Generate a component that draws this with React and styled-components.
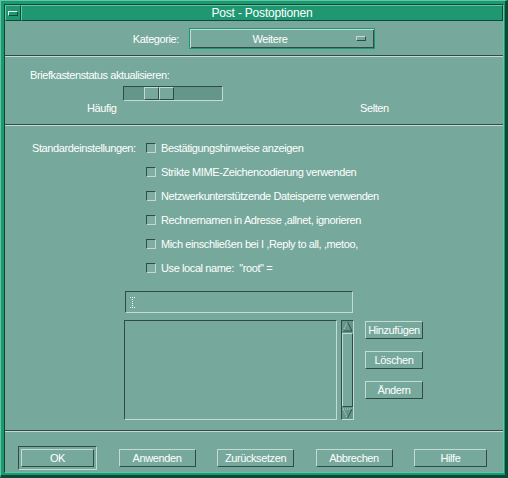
import React from 'react';
import styled, { createGlobalStyle } from 'styled-components';

const BG = '#76a99b';
const TROUGH = '#65968a';
const LIGHT = '#c4dbd3';
const DARK = '#2f4d46';
const GREEN = '#1f9872';

const GlobalStyle = createGlobalStyle`
  html, body {
    margin: 0;
    padding: 0;
    background: ${GREEN};
  }
  body {
    font-family: "Liberation Sans", Arial, sans-serif;
    font-size: 11px;
    letter-spacing: -0.4px;
    color: #fff;
  }
`;

const Frame = styled.div`
  width: 508px;
  height: 478px;
  box-sizing: border-box;
  background: ${GREEN};
  border-top: 1px solid #5cc9a2;
  border-left: 1px solid #5cc9a2;
  border-right: 3px solid #0c4a37;
  border-bottom: 3px solid #0c4a37;
  padding: 3px 1px 2px 3px;
  display: flex;
`;

const Inner = styled.div`
  flex: 1;
  display: flex;
  flex-direction: column;
  border-top: 1px solid #0c4a37;
  border-left: 1px solid #0c4a37;
  border-right: 1px solid #5cc9a2;
  border-bottom: 1px solid #5cc9a2;
`;

const TitleBar = styled.div`
  height: 16px;
  display: flex;
  background: ${GREEN};
`;

const MenuButton = styled.div`
  width: 16px;
  box-sizing: border-box;
  border-top: 1px solid #5cc9a2;
  border-left: 1px solid #5cc9a2;
  border-right: 1px solid #0c4a37;
  border-bottom: 1px solid #0c4a37;
  display: flex;
  align-items: center;
  justify-content: center;
  span {
    width: 8px;
    height: 3px;
    border-top: 1px solid #e6f3ee;
    border-left: 1px solid #e6f3ee;
    border-right: 1px solid #0c4a37;
    border-bottom: 1px solid #0c4a37;
  }
`;

const TitleBox = styled.div`
  flex: 1;
  box-sizing: border-box;
  border-top: 1px solid #5cc9a2;
  border-left: 1px solid #5cc9a2;
  border-right: 1px solid #0c4a37;
  border-bottom: 1px solid #0c4a37;
  display: flex;
  align-items: center;
  justify-content: center;
  font-size: 12px;
  letter-spacing: -0.2px;
`;

const Body = styled.div`
  flex: 1;
  background: ${BG};
  display: flex;
  flex-direction: column;
`;

const Separator = styled.div`
  border-top: 1px solid ${DARK};
  border-bottom: 1px solid ${LIGHT};
  margin-top: ${(p) => p.$top}px;
`;

const CategoryRow = styled.div`
  display: flex;
  align-items: center;
  padding-top: 7px;
`;

const CategoryLabel = styled.div`
  width: 174px;
  text-align: right;
  margin-right: 10px;
`;

const OptionMenu = styled.div`
  width: 186px;
  height: 21px;
  box-sizing: border-box;
  border: 1px solid ${GREEN};
  box-shadow: inset 1px 1px 0 ${LIGHT}, inset -1px -1px 0 ${DARK};
  display: flex;
  align-items: center;
  span {
    flex: 1;
    text-align: center;
  }
  i {
    width: 10px;
    height: 5px;
    box-sizing: border-box;
    margin: 0 8px 0 6px;
    border-top: 1px solid ${LIGHT};
    border-left: 1px solid ${LIGHT};
    border-right: 1px solid ${DARK};
    border-bottom: 1px solid ${DARK};
  }
`;

const StatusSection = styled.div`
  padding-top: 11px;
  display: flex;
  flex-direction: column;
`;

const SectionLabel = styled.div`
  line-height: 14px;
  padding-left: 25px;
`;

const Trough = styled.div`
  width: 100px;
  height: 15px;
  box-sizing: border-box;
  margin: 4px 0 0 118px;
  background: ${TROUGH};
  border-top: 1px solid ${DARK};
  border-left: 1px solid ${DARK};
  border-right: 1px solid ${LIGHT};
  border-bottom: 1px solid ${LIGHT};
  display: flex;
  padding-left: 20px;
`;

const Thumb = styled.div`
  width: 15px;
  box-sizing: border-box;
  background: ${BG};
  border-top: 1px solid ${LIGHT};
  border-left: 1px solid ${LIGHT};
  border-right: 1px solid ${DARK};
  border-bottom: 1px solid ${DARK};
`;

const ScaleLabels = styled.div`
  display: grid;
  grid-template-columns: 273px auto;
  padding-left: 82px;
  line-height: 14px;
`;

const DefaultsSection = styled.div`
  display: grid;
  grid-template-columns: 114px auto;
  padding: 10px 0 0 27px;
`;

const DefaultsLabel = styled.div`
  line-height: 24px;
`;

const CheckList = styled.div`
  display: flex;
  flex-direction: column;
`;

const CheckRow = styled.div`
  height: 24px;
  display: flex;
  align-items: center;
  white-space: pre;
`;

const CheckBox = styled.span`
  width: 10px;
  height: 10px;
  box-sizing: border-box;
  margin-right: 5px;
  background: #7fada1;
  border-top: 1px solid ${DARK};
  border-left: 1px solid ${DARK};
  border-right: 1px solid ${LIGHT};
  border-bottom: 1px solid ${LIGHT};
`;

const TextField = styled.div`
  width: 228px;
  height: 22px;
  box-sizing: border-box;
  margin: 11px 0 0 120px;
  border-top: 1px solid ${DARK};
  border-left: 1px solid ${DARK};
  border-right: 1px solid ${LIGHT};
  border-bottom: 1px solid ${LIGHT};
  display: flex;
  align-items: center;
  padding-left: 4px;
`;

const ListRow = styled.div`
  display: flex;
  margin: 7px 0 0 119px;
`;

const ListBox = styled.div`
  width: 213px;
  height: 100px;
  box-sizing: border-box;
  border-top: 1px solid ${DARK};
  border-left: 1px solid ${DARK};
  border-right: 1px solid ${LIGHT};
  border-bottom: 1px solid ${LIGHT};
`;

const ScrollBar = styled.div`
  width: 13px;
  height: 100px;
  box-sizing: border-box;
  margin-left: 4px;
  background: ${TROUGH};
  border-top: 1px solid ${DARK};
  border-left: 1px solid ${DARK};
  border-right: 1px solid ${LIGHT};
  border-bottom: 1px solid ${LIGHT};
  display: flex;
  flex-direction: column;
`;

const ScrollThumb = styled.div`
  flex: 1;
  margin: 1px 0;
  background: ${BG};
  border-top: 1px solid ${LIGHT};
  border-left: 1px solid ${LIGHT};
  border-right: 1px solid ${DARK};
  border-bottom: 1px solid ${DARK};
`;

const SideButtons = styled.div`
  display: flex;
  flex-direction: column;
  gap: 12px;
  margin: 1px 0 0 11px;
`;

const Button = styled.div`
  width: ${(p) => p.$w || 58}px;
  height: 18px;
  box-sizing: border-box;
  background: ${BG};
  border-top: 1px solid ${LIGHT};
  border-left: 1px solid ${LIGHT};
  border-right: 1px solid ${DARK};
  border-bottom: 1px solid ${DARK};
  display: flex;
  align-items: center;
  justify-content: center;
  white-space: nowrap;
`;

const ActionRow = styled.div`
  display: flex;
  align-items: center;
  justify-content: space-between;
  padding: 14px 16px 0 13px;
`;

const DefaultFrame = styled.div`
  padding: 2px;
  border-top: 1px solid ${DARK};
  border-left: 1px solid ${DARK};
  border-right: 1px solid ${LIGHT};
  border-bottom: 1px solid ${LIGHT};
`;

const Arrow = ({ up }) => (
  <svg width="11" height="11" viewBox="0 0 11 11">
    {up ? (
      <>
        <path d="M1 10 L5.5 1" stroke={LIGHT} strokeWidth="1" strokeDasharray="1 1" fill="none" />
        <path d="M5.5 1 L10 10 L1 10" stroke={DARK} strokeWidth="1" fill="none" />
      </>
    ) : (
      <>
        <path d="M1 1 L10 1 M1 1 L5.5 10" stroke={LIGHT} strokeWidth="1" strokeDasharray="1 1" fill="none" />
        <path d="M5.5 10 L10 1" stroke={DARK} strokeWidth="1" fill="none" />
      </>
    )}
  </svg>
);

const IBeam = () => (
  <svg width="5" height="11" viewBox="0 0 5 11">
    <path d="M0 0.5 H5 M0 10.5 H5 M2.5 0 V11" stroke="#fff" strokeWidth="1" strokeDasharray="1 1" fill="none" />
  </svg>
);

const options = [
  'Bestätigungshinweise anzeigen',
  'Strikte MIME-Zeichencodierung verwenden',
  'Netzwerkunterstützende Dateisperre verwenden',
  'Rechnernamen in Adresse ,allnet, ignorieren',
  'Mich einschließen bei I ,Reply to all, ,metoo,',
  'Use local name:  "root" =',
];

const App = () => {
  return (
    <>
      <GlobalStyle />
      <Frame>
        <Inner>
          <TitleBar>
            <MenuButton><span /></MenuButton>
            <TitleBox>Post - Postoptionen</TitleBox>
          </TitleBar>
          <Body>
            <CategoryRow>
              <CategoryLabel>Kategorie:</CategoryLabel>
              <OptionMenu>
                <span>Weitere</span>
                <i />
              </OptionMenu>
            </CategoryRow>
            <Separator $top={6} />

            <StatusSection>
              <SectionLabel>Briefkastenstatus aktualisieren:</SectionLabel>
              <Trough>
                <Thumb />
                <Thumb />
              </Trough>
              <ScaleLabels>
                <span>Häufig</span>
                <span>Selten</span>
              </ScaleLabels>
            </StatusSection>
            <Separator $top={9} />

            <DefaultsSection>
              <DefaultsLabel>Standardeinstellungen:</DefaultsLabel>
              <CheckList>
                {options.map((o) => (
                  <CheckRow key={o}>
                    <CheckBox />
                    {o}
                  </CheckRow>
                ))}
              </CheckList>
            </DefaultsSection>

            <TextField><IBeam /></TextField>
            <ListRow>
              <ListBox />
              <ScrollBar>
                <Arrow up />
                <ScrollThumb />
                <Arrow />
              </ScrollBar>
              <SideButtons>
                <Button>Hinzufügen</Button>
                <Button>Löschen</Button>
                <Button>Ändern</Button>
              </SideButtons>
            </ListRow>
            <Separator $top={10} />

            <ActionRow>
              <DefaultFrame>
                <Button $w={73}>OK</Button>
              </DefaultFrame>
              <Button $w={77}>Anwenden</Button>
              <Button $w={77}>Zurücksetzen</Button>
              <Button $w={77}>Abbrechen</Button>
              <Button $w={73}>Hilfe</Button>
            </ActionRow>
          </Body>
        </Inner>
      </Frame>
    </>
  );
};

export default App;
